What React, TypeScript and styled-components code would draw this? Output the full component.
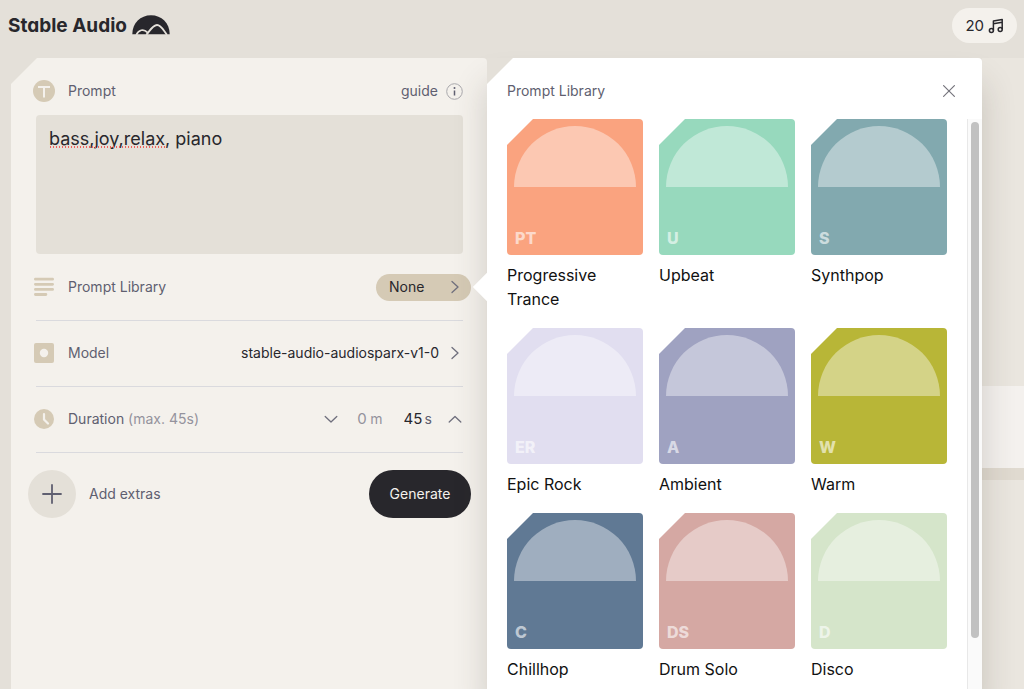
import React, { useState } from "react";
import styled, { createGlobalStyle } from "styled-components";

const GlobalStyle = createGlobalStyle`
  *, *::before, *::after { box-sizing: border-box; }
  body {
    margin: 0;
    background: #e4e0d9;
    color: #28272c;
    font-family: Inter, "Liberation Sans", sans-serif;
    font-size: 14px;
    line-height: 24px;
  }
  button, input, textarea { font: inherit; color: inherit; }
  svg { display: block; flex: none; }
`;

const Page = styled.div`
  display: flex;
  flex-direction: column;
  height: 100vh;
  overflow: hidden;
`;

const Header = styled.header`
  display: flex;
  flex: none;
  align-items: flex-start;
  justify-content: space-between;
  height: 58px;
  padding: 8px 7px 0 8px;
`;

const Logo = styled.a`
  display: flex;
  align-items: center;
  gap: 5px;
  height: 36px;
  color: #28272c;
  font-size: 19px;
  font-weight: 700;
  font-feature-settings: "cv11";
  text-decoration: none;
`;

const Credits = styled.button`
  display: flex;
  align-items: center;
  gap: 4px;
  height: 35px;
  padding: 0 13px;
  border: 0;
  border-radius: 18px;
  background: #f4f1ec;
  font-size: 15px;
`;

const Workspace = styled.main`
  display: grid;
  flex: 1;
  grid-template-columns: minmax(0, 476fr) minmax(0, 495fr) 42px;
  grid-template-rows: minmax(0, 1fr);
  min-height: 0;
  padding-left: 11px;
`;

const Panel = styled.form`
  padding: 21px 16px 0 17px;
  border-radius: 0 4px 0 0;
  background: #f4f1ec;
  clip-path: polygon(0 26px, 26px 0, 100% 0, 100% 100%, 0 100%);
`;

const PanelHead = styled.div`
  display: flex;
  align-items: center;
  height: 24px;
  margin: 0 8px 12px 5px;
  color: #5f5f70;
`;

const Label = styled.label`
  margin-left: 13px;
  color: #5f5f70;
`;

const Muted = styled.span`
  color: #94939d;
`;

const GuideLink = styled.a`
  display: flex;
  align-items: center;
  gap: 8px;
  margin-left: auto;
  color: #5f5f70;
  text-decoration: none;
`;

const PromptBox = styled.div`
  position: relative;
  margin: 0 8px 1px;
`;

const PromptArea = styled.textarea`
  display: block;
  width: 100%;
  height: 139px;
  padding: 12px 13px;
  border: 0;
  border-radius: 4px;
  outline: 0;
  background: #e4e0d8;
  font-size: 18px;
  resize: none;
`;

const SpellingMark = styled.span`
  position: absolute;
  top: 31px;
  left: 13px;
  width: 117px;
  height: 2px;
  background: radial-gradient(circle, #f0605c 0 1px, transparent 1px) 0 0 / 3px 2px;
`;

const Row = styled.div`
  display: flex;
  align-items: center;
  height: 66px;
  margin: 0 8px;
  padding-bottom: 1px;
  border-bottom: 1px solid #dadade;
`;

const RowIcon = styled.span`
  display: grid;
  place-items: center;
  width: 22px;
  margin-left: -3px;
`;

const LibraryButton = styled.button`
  display: flex;
  align-items: center;
  justify-content: space-between;
  width: 95px;
  height: 27px;
  margin: 0 -8px 0 auto;
  padding: 0 8px 0 13px;
  border: 0;
  border-radius: 14px;
  background: #d5cab5;
`;

const ModelButton = styled.button`
  display: flex;
  align-items: center;
  gap: 8px;
  margin-left: auto;
  padding: 0;
  border: 0;
  background: none;
`;

const Stepper = styled.div`
  display: flex;
  align-items: center;
  margin-left: auto;
`;

const StepButton = styled.button`
  display: grid;
  place-items: center;
  width: 16px;
  height: 24px;
  padding: 0;
  border: 0;
  background: none;
`;

const Unit = styled.label<{ $muted?: boolean }>`
  display: flex;
  align-items: center;
  gap: ${(p) => (p.$muted ? 3 : 2)}px;
  margin-left: ${(p) => (p.$muted ? 18 : 21)}px;
  margin-right: ${(p) => (p.$muted ? 0 : 15)}px;
  color: ${(p) => (p.$muted ? "#94939d" : "#5f5f70")};
`;

const UnitInput = styled.input<{ $digits: number; $muted?: boolean }>`
  width: ${(p) => p.$digits * 9 + 1}px;
  padding: 0;
  border: 0;
  outline: 0;
  background: none;
  color: ${(p) => (p.$muted ? "#94939d" : "#28272c")};
  font-size: 15px;
`;

const Actions = styled.div`
  display: flex;
  align-items: center;
  justify-content: space-between;
  margin-top: 17px;
`;

const AddExtras = styled.button`
  display: flex;
  align-items: center;
  gap: 13px;
  padding: 0;
  border: 0;
  background: none;
  color: #5f5f70;
`;

const AddCircle = styled.span`
  display: grid;
  place-items: center;
  width: 48px;
  height: 48px;
  border-radius: 50%;
  background: #e4e0d8;
`;

const Generate = styled.button`
  width: 102px;
  height: 48px;
  padding: 0;
  border: 0;
  border-radius: 24px;
  background: #28272c;
  color: #f4f1ec;
`;

const Popover = styled.div`
  position: relative;
  z-index: 1;
  box-shadow: 0 26px 32px rgba(60, 50, 40, 0.2);

  &::before {
    position: absolute;
    top: 219px;
    left: -10px;
    width: 20px;
    height: 20px;
    background: #fff;
    content: "";
    transform: rotate(45deg);
  }
`;

const Library = styled.section`
  position: relative;
  display: flex;
  flex-direction: column;
  height: 100%;
  border-radius: 0 4px 0 0;
  background: #fff;
  clip-path: polygon(0 26px, 26px 0, 100% 0, 100% 100%, 0 100%);
`;

const LibraryHead = styled.header`
  display: flex;
  flex: none;
  align-items: center;
  justify-content: space-between;
  height: 61px;
  padding: 4px 25px 0 20px;
`;

const LibraryTitle = styled.h2`
  margin: 0;
  color: #5f5f70;
  font-size: 14px;
  font-weight: 400;
`;

const CloseButton = styled.button`
  display: grid;
  place-items: center;
  width: 16px;
  height: 24px;
  padding: 0;
  border: 0;
  background: none;
`;

const Scroller = styled.div`
  display: flex;
  flex: 1;
  min-height: 0;
`;

const Grid = styled.div`
  display: grid;
  flex: 1;
  grid-template-columns: repeat(3, minmax(0, 1fr));
  align-content: start;
  gap: 17px 16px;
  padding: 0 20px;
  overflow-y: auto;
  scrollbar-width: none;
`;

const Track = styled.div`
  flex: none;
  width: 15px;
  padding: 3px 3px 0;
  border-left: 1px solid #e8e8e8;
  background: #fafafa;
`;

const Thumb = styled.div`
  width: 8px;
  height: 91%;
  border-radius: 4px;
  background: #c1c1c1;
`;

const Card = styled.button`
  align-self: start;
  padding: 0;
  border: 0;
  background: none;
  color: #111;
  font-size: 16px;
  text-align: left;
`;

const Cover = styled.span<{ $color: string }>`
  display: flex;
  flex-direction: column;
  justify-content: space-between;
  margin-bottom: 8px;
  padding: 7px;
  aspect-ratio: 1;
  border-radius: 4px;
  background: ${(p) => p.$color};
  clip-path: polygon(0 26px, 26px 0, 100% 0, 100% 100%, 0 100%);
`;

const Dome = styled.span`
  aspect-ratio: 2;
  border-radius: 999px 999px 0 0;
  background: rgba(255, 255, 255, 0.4);
`;

const Initials = styled.span`
  padding-left: 1px;
  color: rgba(255, 255, 255, 0.6);
  font-weight: 800;
  line-height: 20px;
`;

const Backdrop = styled.aside`
  display: flex;
  flex-direction: column;
  background: #eae6df;
`;

const PlayerBand = styled.div`
  height: 94px;
  margin-top: 328px;
  border-bottom: 12px solid #e0dad0;
  background: #f4f1ee;
`;

const genres = [
  { name: "Progressive Trance", initials: "PT", color: "#faa37f" },
  { name: "Upbeat", initials: "U", color: "#97d9bd" },
  { name: "Synthpop", initials: "S", color: "#82a9af" },
  { name: "Epic Rock", initials: "ER", color: "#e1def0" },
  { name: "Ambient", initials: "A", color: "#9fa2c1" },
  { name: "Warm", initials: "W", color: "#b8b637" },
  { name: "Chillhop", initials: "C", color: "#607994" },
  { name: "Drum Solo", initials: "DS", color: "#d5a8a3" },
  { name: "Disco", initials: "D", color: "#d5e5ca" },
];

const chevrons = {
  right: "M5 2.500l6 5.500-6 5.500",
  down: "M2.200 5.500l5.800 5.500 5.800-5.500",
  up: "M2.200 11l5.800-5.500 5.800 5.500",
};

function Chevron({ to }: { to: keyof typeof chevrons }) {
  return (
    <svg width="16" height="16" viewBox="0 0 16 16" fill="none" stroke="#6f6f7d" strokeWidth="1.3" strokeLinecap="round" strokeLinejoin="round">
      <path d={chevrons[to]} />
    </svg>
  );
}

export default function App() {
  const [prompt, setPrompt] = useState("bass,joy,relax, piano");
  const [minutes, setMinutes] = useState("0");
  const [seconds, setSeconds] = useState("45");

  return (
    <Page>
      <GlobalStyle />
      <Header>
        <Logo href="#">
          Stable Audio
          <svg width="38" height="22" viewBox="0 0 38 22">
            <path d="M0.300 19.300C0.300 8 8.500 0.300 19 0.300S37.700 8 37.700 19.300z" fill="#28272c" />
            <path
              d="M4.300 19.800C6.500 15 11.500 13.300 15.300 17.300M14.300 19.800C17.500 16.500 20.500 10 25 10C29.500 10 32 16.500 35 19.800"
              fill="none"
              stroke="#e4e0d9"
              strokeWidth="1.800"
            />
          </svg>
        </Logo>
        <Credits type="button">
          20
          <svg width="16" height="18" viewBox="0 0 16 18" fill="none" stroke="#28272c" strokeWidth="1.500" strokeLinejoin="round">
            <path d="M5.400 13.500V4L14.200 2.500V12.200M5.400 6.800L14.200 5.300" />
            <circle cx="3.400" cy="13.600" r="2" />
            <circle cx="12.200" cy="12.400" r="2" />
          </svg>
        </Credits>
      </Header>
      <Workspace>
        <Panel onSubmit={(e) => e.preventDefault()}>
          <PanelHead>
            <svg width="22" height="22" viewBox="0 0 22 22">
              <circle cx="11" cy="11" r="11" fill="#d5cab5" />
              <path d="M5 7h12M11 7v10.500" stroke="#f4f1ec" strokeWidth="2" fill="none" />
            </svg>
            <Label htmlFor="prompt">Prompt</Label>
            <GuideLink href="#guide">
              guide
              <svg width="17" height="17" viewBox="0 0 17 17" fill="none">
                <circle cx="8.500" cy="8.500" r="7.800" stroke="#a9a8ac" />
                <path d="M8.500 7.500v5" stroke="#5f5f70" strokeWidth="1.500" />
                <circle cx="8.500" cy="5" r="1" fill="#5f5f70" />
              </svg>
            </GuideLink>
          </PanelHead>
          <PromptBox>
            <PromptArea id="prompt" spellCheck={false} value={prompt} onChange={(e) => setPrompt(e.target.value)} />
            <SpellingMark />
          </PromptBox>
          <Row>
            <RowIcon>
              <svg width="20" height="20" viewBox="0 0 20 20" stroke="#d5cab5" strokeWidth="2.800" strokeLinecap="round">
                <path d="M1.400 2.200h17.200M1.400 7.300h17.200M1.400 12.400h17.200M1.400 17.500h10.500" />
              </svg>
            </RowIcon>
            <Label htmlFor="library">Prompt Library</Label>
            <LibraryButton id="library" type="button">
              None
              <Chevron to="right" />
            </LibraryButton>
          </Row>
          <Row>
            <RowIcon>
              <svg width="20" height="20" viewBox="0 0 20 20">
                <rect width="20" height="20" rx="2" fill="#d5cab5" />
                <circle cx="10" cy="10" r="4.200" fill="#f4f1ec" />
              </svg>
            </RowIcon>
            <Label htmlFor="model">Model</Label>
            <ModelButton id="model" type="button">
              stable-audio-audiosparx-v1-0
              <Chevron to="right" />
            </ModelButton>
          </Row>
          <Row>
            <RowIcon>
              <svg width="20" height="20" viewBox="0 0 20 20">
                <circle cx="10" cy="10" r="10" fill="#d5cab5" />
                <path d="M10 5v5.500l4 4" stroke="#f4f1ec" strokeWidth="2.200" strokeLinecap="round" fill="none" />
              </svg>
            </RowIcon>
            <Label htmlFor="seconds">
              Duration <Muted>(max. 45s)</Muted>
            </Label>
            <Stepper>
              <StepButton type="button" aria-label="Shorter">
                <Chevron to="down" />
              </StepButton>
              <Unit $muted>
                <UnitInput $digits={1} $muted value={minutes} onChange={(e) => setMinutes(e.target.value)} />m
              </Unit>
              <Unit>
                <UnitInput id="seconds" $digits={2} value={seconds} onChange={(e) => setSeconds(e.target.value)} />s
              </Unit>
              <StepButton type="button" aria-label="Longer">
                <Chevron to="up" />
              </StepButton>
            </Stepper>
          </Row>
          <Actions>
            <AddExtras type="button">
              <AddCircle>
                <svg width="20" height="20" viewBox="0 0 20 20" stroke="#5f5f70" strokeWidth="1.800" strokeLinecap="round">
                  <path d="M10 1v18M1 10h18" />
                </svg>
              </AddCircle>
              Add extras
            </AddExtras>
            <Generate type="submit">Generate</Generate>
          </Actions>
        </Panel>
        <Popover>
          <Library aria-labelledby="library-title">
            <LibraryHead>
              <LibraryTitle id="library-title">Prompt Library</LibraryTitle>
              <CloseButton type="button" aria-label="Close">
                <svg width="12" height="12" viewBox="0 0 12 12" stroke="#77767e" strokeWidth="1.200" strokeLinecap="round">
                  <path d="M0.600 0.600l10.800 10.800M11.400 0.600L0.600 11.400" />
                </svg>
              </CloseButton>
            </LibraryHead>
            <Scroller>
              <Grid>
                {genres.map((genre) => (
                  <Card key={genre.name} type="button">
                    <Cover $color={genre.color}>
                      <Dome />
                      <Initials>{genre.initials}</Initials>
                    </Cover>
                    {genre.name}
                  </Card>
                ))}
              </Grid>
              <Track>
                <Thumb />
              </Track>
            </Scroller>
          </Library>
        </Popover>
        <Backdrop>
          <PlayerBand />
        </Backdrop>
      </Workspace>
    </Page>
  );
}
